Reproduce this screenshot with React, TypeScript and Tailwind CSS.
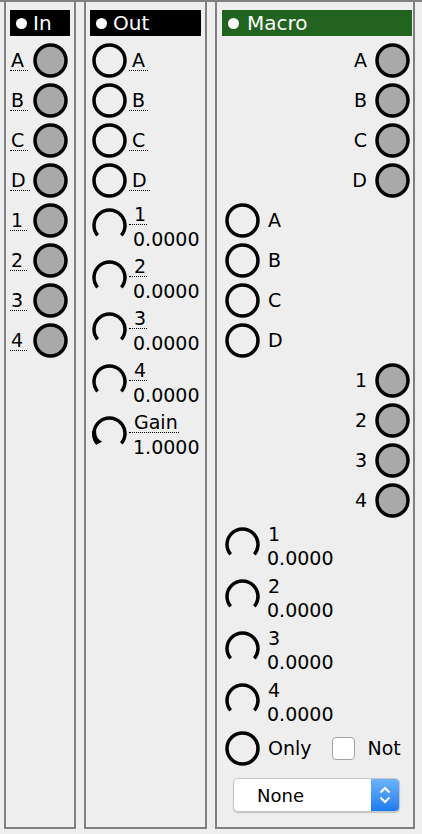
import React from "react";

type PortProps = { filled?: boolean };

function Port({ filled }: PortProps) {
  return (
    <svg width="35" height="35" viewBox="0 0 35 35" className="shrink-0">
      <circle cx="17.5" cy="17.5" r="15.5" fill={filled ? "#a9a9a9" : "none"} stroke="#000" strokeWidth="3.5" />
    </svg>
  );
}

function Knob({ wedge }: { wedge?: boolean }) {
  return (
    <svg width="35" height="35" viewBox="0 0 35 35" className="shrink-0">
      <path d="M5.63 27.46 A15.5 15.5 0 1 1 29.37 27.46" fill="none" stroke="#000" strokeWidth="3.5" />
      {wedge && <path d="M4.1 28.75 A17.5 17.5 0 0 1 0.4 14.5 L4.2 14.9 A11 11 0 0 0 10.2 25.8 Z" fill="#000" />}
    </svg>
  );
}

function Header({ title, green }: { title: string; green?: boolean }) {
  return (
    <div
      className={
        green
          ? "h-[26px] mt-[8px] ml-[5px] mr-[1px] flex items-center pl-[6px] gap-[8px] text-white text-[20px] bg-[#22631f]"
          : "h-[26px] mt-[8px] mx-[4px] flex items-center pl-[6px] gap-[6px] text-white text-[20px] bg-black"
      }
    >
      <span className="w-[11px] h-[11px] rounded-full bg-white shrink-0" />
      <span className="leading-none">{title}</span>
    </div>
  );
}

const dotted = "border-b border-dotted border-black leading-[20px]";

export default function App() {
  const letters = ["A", "B", "C", "D"];
  const nums = ["1", "2", "3", "4"];

  return (
    <div className="w-[422px] h-[834px] bg-[#eeeeee] border-t-2 border-[#808080] flex items-start pl-1 gap-2 font-['DejaVu_Sans',sans-serif] text-[19px] text-black">

      {/* IN */}
      <div className="w-[72px] h-[827px] border-2 border-t-0 border-[#808080] flex flex-col">
        <Header title="In" />
        <div className="mt-[4px] flex flex-col">
          {[...letters, ...nums].map((l) => (
            <div key={l} className="h-[40px] flex items-center justify-between pl-[4px] pr-[6px]">
              <span className={`${dotted} pl-[1px] pr-[4px]`}>{l}</span>
              <Port filled />
            </div>
          ))}
        </div>
      </div>

      {/* OUT */}
      <div className="w-[123px] h-[827px] border-2 border-t-0 border-[#808080] flex flex-col">
        <Header title="Out" />
        <div className="mt-[4px] flex flex-col">
          {letters.map((l) => (
            <div key={l} className="h-[40px] flex items-center pl-[6px] gap-[2px]">
              <Port />
              <span className={`${dotted} pl-[3px] pr-[3px]`}>{l}</span>
            </div>
          ))}
          {[...nums, "Gain"].map((l) => (
            <div key={l} className="h-[52px] flex items-start pl-[6px] gap-[2px]">
              <div className="mt-[8px]">
                <Knob wedge={l === "Gain"} />
              </div>
              <div className="pt-[4px] flex flex-col items-start">
                <span className={`${dotted} pl-[5px] pr-[1px]`}>{l}</span>
                <span className="mt-[4px] leading-[20px] pl-[4px]">{l === "Gain" ? "1.0000" : "0.0000"}</span>
              </div>
            </div>
          ))}
        </div>
      </div>

      {/* MACRO */}
      <div className="w-[200px] h-[827px] border-2 border-t-0 border-[#808080] flex flex-col">
        <Header title="Macro" green />
        <div className="mt-[4px] flex flex-col">
          {letters.map((l) => (
            <div key={"r" + l} className="h-[40px] flex items-center justify-end pr-[3px] gap-[8px]">
              <span className="leading-[20px]">{l}</span>
              <Port filled />
            </div>
          ))}
          {letters.map((l) => (
            <div key={"l" + l} className="h-[40px] flex items-center pl-[8px] gap-[8px]">
              <Port />
              <span className="leading-[20px]">{l}</span>
            </div>
          ))}
          {nums.map((l) => (
            <div key={"n" + l} className="h-[40px] flex items-center justify-end pr-[3px] gap-[8px]">
              <span className="leading-[20px]">{l}</span>
              <Port filled />
            </div>
          ))}
          {nums.map((l) => (
            <div key={"k" + l} className="h-[52px] flex items-start pl-[8px] gap-[7px]">
              <div className="mt-[7px]">
                <Knob />
              </div>
              <div className="pt-[4px] flex flex-col items-start">
                <span className="leading-[20px] pl-[1px]">{l}</span>
                <span className="mt-[4px] leading-[20px]">0.0000</span>
              </div>
            </div>
          ))}

          {/* ONLY / NOT */}
          <div className="h-[40px] flex items-center pl-[8px]">
            <Port />
            <span className="ml-[8px] leading-[20px]">Only</span>
            <span className="ml-[20px] w-[23px] h-[23px] bg-white border border-[#a3a3a3] rounded-[4px]" />
            <span className="ml-[13px] leading-[20px]">Not</span>
          </div>

          {/* SELECT */}
          <div className="mt-[10px] ml-[16px] w-[167px] h-[34px] flex bg-white border border-[#c6c6c6] rounded-[5px] shadow-[0_1px_1px_rgba(0,0,0,0.18)] overflow-hidden">
            <div className="flex-1 flex items-center pl-[23px] text-[18px]">None</div>
            <div className="w-[28px] flex flex-col items-center justify-center gap-[2px] bg-gradient-to-b from-[#6db3fb] to-[#1a7bf2]">
              <svg width="12" height="8" viewBox="0 0 12 8">
                <path d="M1.5 6.5 L6 2 L10.5 6.5" fill="none" stroke="#fff" strokeWidth="2" />
              </svg>
              <svg width="12" height="8" viewBox="0 0 12 8">
                <path d="M1.5 1.5 L6 6 L10.5 1.5" fill="none" stroke="#fff" strokeWidth="2" />
              </svg>
            </div>
          </div>
        </div>
      </div>

    </div>
  );
}
